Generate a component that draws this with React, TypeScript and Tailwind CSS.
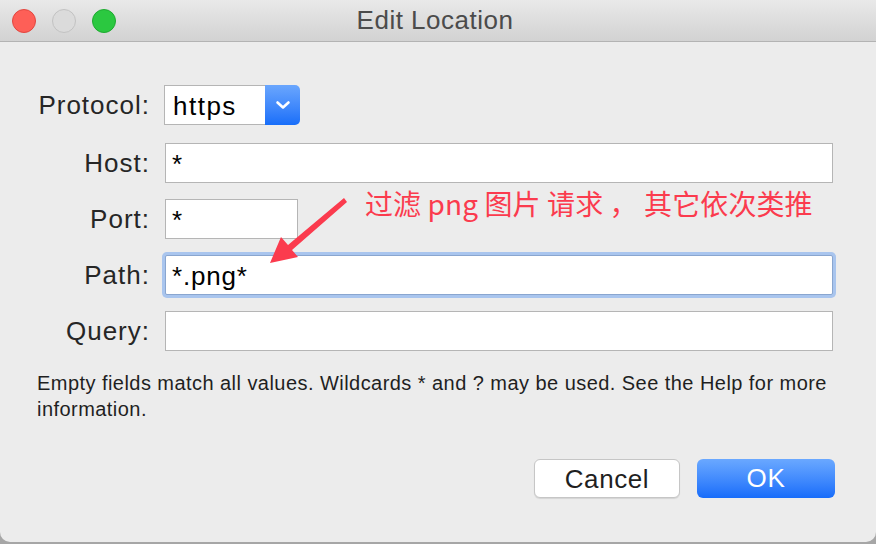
import React from "react";

const sys = { fontFamily: '"Liberation Sans", "Noto Sans CJK SC", sans-serif' };

function Field({ label, value, width, focused }: { label: string; value?: string; width?: string; focused?: boolean }) {
  return (
    <div className="flex items-center h-10">
      <span className="w-[150px] text-right text-[26px] tracking-[1px] text-[#262626]">{label}</span>
      <div className="ml-[15px] flex">
        <div
          className={
            "h-10 bg-white border flex items-center pl-[6px] pt-[2px] text-[26px] tracking-[0.8px] text-black " +
            (width ?? "w-[668px]") +
            (focused ? " border-[#8aa6cf] ring-[3px] ring-[#a9c5ee] rounded-[2px]" : " border-[#b5b5b5]")
          }
        >
          {value}
        </div>
      </div>
    </div>
  );
}

export default function App() {
  return (
    <div className="w-[876px] h-[544px] bg-[#a6a6a6] overflow-hidden relative" style={sys}>
      <div className="h-[542px] bg-[#ececec] rounded-b-[10px] flex flex-col">
        {/* title bar */}
        <div className="h-[42px] bg-gradient-to-b from-[#e9e9e9] to-[#d2d2d2] border-b border-[#b3b3b3] flex items-center relative">
          <div className="flex gap-4 pl-3">
            <span className="w-6 h-6 rounded-full bg-[#fe5f57] border border-[#e2463f]" />
            <span className="w-6 h-6 rounded-full bg-[#dbdbdb] border border-[#c2c2c2]" />
            <span className="w-6 h-6 rounded-full bg-[#2bc840] border border-[#1eaa30]" />
          </div>
          <span className="absolute left-0 right-[6px] text-center text-[26px] tracking-[0.5px] text-[#4b4b4b] pointer-events-none">
            Edit Location
          </span>
        </div>

        {/* form */}
        <div className="pt-[43px] flex flex-col">
          <div className="flex items-center h-10">
            <span className="w-[150px] text-right text-[26px] tracking-[1px] text-[#262626]">Protocol:</span>
            <div className="ml-[14px] flex h-10 w-[136px]">
              <div className="flex-1 bg-white border border-[#b5b5b5] border-r-0 flex items-center pl-2 pt-[2px] text-[26px] tracking-[1.5px] text-black">
                https
              </div>
              <div className="w-[35px] rounded-r-[5px] bg-gradient-to-b from-[#6aa6fd] to-[#176ef9] flex items-center justify-center">
                <svg width="16" height="10" viewBox="0 0 16 10">
                  <path d="M2.5 2.5 L8 7.5 L13.5 2.5" stroke="white" strokeWidth="2.6" fill="none" strokeLinecap="round" strokeLinejoin="round" />
                </svg>
              </div>
            </div>
          </div>
          <div className="mt-[18px] flex flex-col gap-4">
            <Field label="Host:" value="*" />
            <Field label="Port:" value="*" width="w-[133px]" />
            <Field label="Path:" value="*.png*" focused />
            <Field label="Query:" />
          </div>

          <p className="mt-[19px] pl-[37px] pr-[30px] text-[20px] tracking-[0.45px] leading-[26px] text-[#1f1f1f]">
            Empty fields match all values. Wildcards * and ? may be used. See the Help for more information.
          </p>

          <div className="mt-[37px] flex justify-end gap-[17px] pr-[41px]">
            <button className="w-[146px] h-[39px] bg-white border border-[#c6c6c6] rounded-[6px] text-[26px] tracking-[0.6px] text-[#1f1f1f] shadow-[0_1px_1px_rgba(0,0,0,0.1)]">
              Cancel
            </button>
            <button className="w-[138px] h-[39px] rounded-[6px] bg-gradient-to-b from-[#6aa8ff] to-[#166cfa] text-[26px] tracking-[0.6px] text-white">
              OK
            </button>
          </div>
        </div>
      </div>

      {/* annotation */}
      <span className="absolute left-[365px] top-[185px] text-[28px] tracking-[0.1px] leading-[36px] text-[#fb3b4e]" style={{ fontFamily: '"Noto Sans CJK SC", "Liberation Sans", sans-serif' }}>
        过滤 png 图片 请求 ， 其它依次类推
      </span>
      <svg className="absolute left-0 top-0 pointer-events-none" width="876" height="544">
        <polygon
          points="344,198 347,202 292,250 298,257 270,263 281,237 288,245"
          fill="#fb3b4e"
        />
      </svg>
    </div>
  );
}
